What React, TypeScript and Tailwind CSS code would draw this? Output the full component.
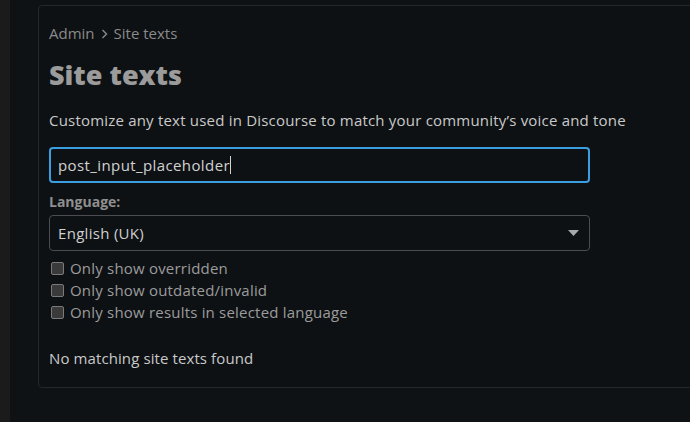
import React from 'react';

const font = { fontFamily: '"Open Sans", "Noto Sans", sans-serif' };

const filters = [
  'Only show overridden',
  'Only show outdated/invalid',
  'Only show results in selected language',
];

const App = () => {
  return (
    <div className="flex h-[422px] w-[690px] overflow-hidden bg-[#0f1215]" style={font}>
      <div className="w-[10px] shrink-0 bg-[#1c1b1b]" />
      <div className="pl-[28px] pt-[5px]">
        <div className="h-[383px] w-[720px] rounded-[4px] border border-[#25282b] bg-[#0e1114] pl-[10px] pt-[17px]">
          <div className="flex items-center gap-[6px] text-[15px] leading-[21px] text-[#8a8a8a]">
            <span>Admin</span>
            <svg width="7" height="10" viewBox="0 0 7 10">
              <path d="M1.5 1L5.5 5L1.5 9" fill="none" stroke="#8a8a8a" strokeWidth="1.4" />
            </svg>
            <span>Site texts</span>
          </div>
          <h1 className="mt-[13px] text-[27px] font-extrabold leading-[36px] text-[#9b9b9b]">Site texts</h1>
          <p className="mt-[17px] text-[15px] leading-[20px] tracking-[0.2px] text-[#c9c9c9]">
            Customize any text used in Discourse to match your community’s voice and tone
          </p>
          <div className="mt-[17px] flex h-[36px] w-[541px] items-center rounded-[4px] border-2 border-[#3b9ee0] pl-[7px] text-[15px] tracking-[0.4px] text-[#d2d2d2]">
            post_input_placeholder<span className="h-[18px] w-px bg-[#d2d2d2]" />
          </div>
          <div className="mt-[10px] text-[14px] font-bold leading-[18px] text-[#8f8f8f]">Language:</div>
          <div className="mt-[4px] flex h-[36px] w-[541px] items-center justify-between rounded-[4px] border border-[#4a4c4f] pl-[8px] pr-[10px] text-[15px] tracking-[0.3px] text-[#cfcfcf]">
            <span>English (UK)</span>
            <svg width="11" height="6" viewBox="0 0 11 6">
              <path d="M0 0H11L5.5 6Z" fill="#a9a9a9" />
            </svg>
          </div>
          <div className="mt-[9px] flex flex-col gap-[6px]">
            {filters.map((f) => (
              <div key={f} className="flex h-[16px] items-center gap-[6px] pl-[2px] text-[15px] tracking-[0.2px] text-[#9c9c9c]">
                <span className="h-[13px] w-[13px] shrink-0 rounded-[2px] border border-[#7a7a7a] bg-[#3a3a3a]" />
                {f}
              </div>
            ))}
          </div>
          <p className="mt-[28px] text-[15px] leading-[20px] tracking-[0.1px] text-[#c9c9c9]">No matching site texts found</p>
        </div>
      </div>
    </div>
  );
};

export default App;
